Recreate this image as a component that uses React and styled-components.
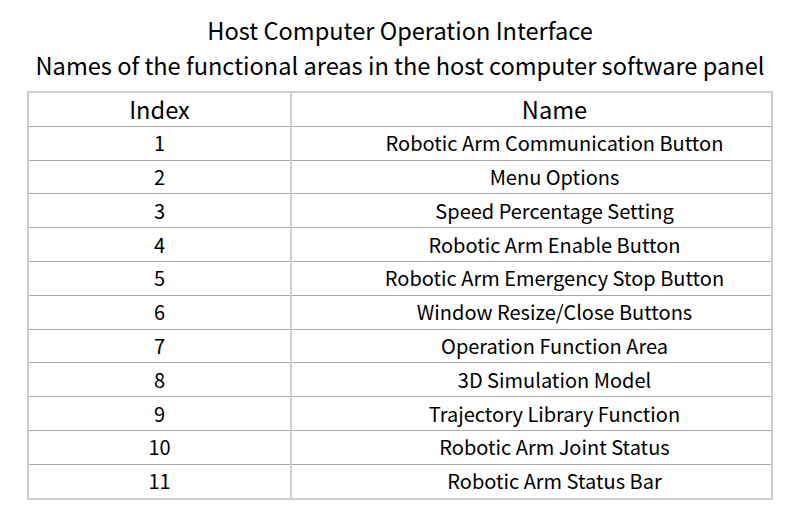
import React from 'react';
import styled, { createGlobalStyle } from 'styled-components';

const Global = createGlobalStyle`
  html, body {
    margin: 0;
    padding: 0;
    background: #fff;
  }
  body {
    font-family: "Noto Sans CJK SC", "Noto Sans", sans-serif;
    color: #000;
  }
`;

const Page = styled.div`
  width: 800px;
  height: 518px;
  display: flex;
  flex-direction: column;
  align-items: center;
  padding-top: 13px;
  box-sizing: border-box;
`;

const Title = styled.div`
  font-size: 23.6px;
  line-height: 35px;
  text-align: center;
  white-space: nowrap;
`;

const Table = styled.table`
  margin-top: 8px;
  width: 746px;
  border-collapse: collapse;
  border: 2px solid #cfcfcf;
  font-size: 20px;
`;

const Cell = styled.td`
  height: 32.8px;
  padding: 0 0 0 ${(p) => (p.$name ? '46px' : '0')};
  text-align: center;
  line-height: 1;
  border-top: 1px solid #a9a9a9;
  border-left: 2px solid #cfcfcf;
  border-right: 2px solid #cfcfcf;
  width: ${(p) => p.$w || 'auto'};
`;

const HeadCell = styled(Cell).attrs({ as: 'th' })`
  font-weight: 400;
  font-size: 23.6px;
  border-top: 2px solid #cfcfcf;
`;

const rows = [
  'Robotic Arm Communication Button',
  'Menu Options',
  'Speed Percentage Setting',
  'Robotic Arm Enable Button',
  'Robotic Arm Emergency Stop Button',
  'Window Resize/Close Buttons',
  'Operation Function Area',
  '3D Simulation Model',
  'Trajectory Library Function',
  'Robotic Arm Joint Status',
  'Robotic Arm Status Bar',
];

export default function App() {
  return (
    <Page>
      <Global />
      <Title>Host Computer Operation Interface</Title>
      <Title>Names of the functional areas in the host computer software panel</Title>
      <Table>
        <thead>
          <tr>
            <HeadCell $w="261px">Index</HeadCell>
            <HeadCell $name>Name</HeadCell>
          </tr>
        </thead>
        <tbody>
          {rows.map((name, i) => (
            <tr key={name}>
              <Cell>{i + 1}</Cell>
              <Cell $name>{name}</Cell>
            </tr>
          ))}
        </tbody>
      </Table>
    </Page>
  );
}
